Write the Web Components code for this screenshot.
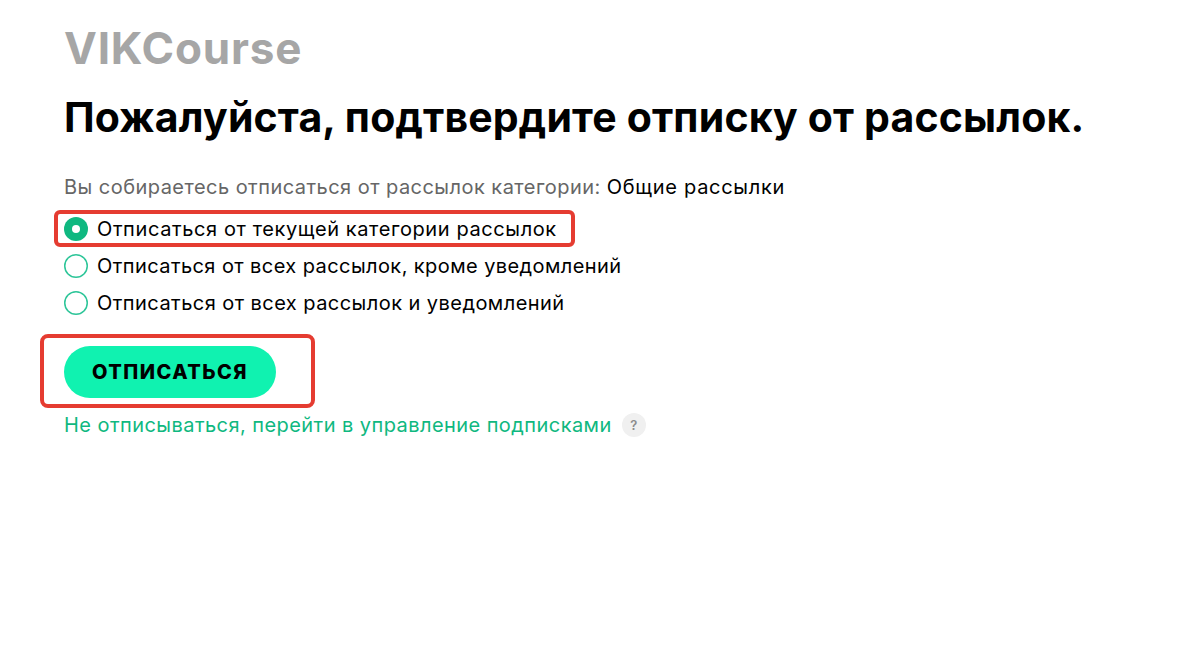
<!DOCTYPE html>
<html lang="ru">
<head>
<meta charset="utf-8">
<title>VIKCourse</title>
<style>
  html, body { margin: 0; background: #fff; }
  body { font-family: Inter, "Noto Sans", sans-serif; color: #000; }
</style>
</head>
<body>
<unsub-page>
  <span slot="logo">VIKCourse</span>
  <span slot="title">Пожалуйста, подтвердите отписку от рассылок.</span>
  <span slot="intro">Вы собираетесь отписаться от рассылок категории:</span>
  <span slot="category">Общие рассылки</span>
  <radio-row slot="options" checked marked style="letter-spacing: 0.6px">Отписаться от текущей категории рассылок</radio-row>
  <radio-row slot="options" style="letter-spacing: 0.42px">Отписаться от всех рассылок, кроме уведомлений</radio-row>
  <radio-row slot="options" style="letter-spacing: 0.45px">Отписаться от всех рассылок и уведомлений</radio-row>
  <pill-button slot="action" marked>Отписаться</pill-button>
  <help-link slot="link">Не отписываться, перейти в управление подписками</help-link>
</unsub-page>

<script>
class UnsubPage extends HTMLElement {
  constructor() {
    super();
    this.attachShadow({ mode: "open" });
  }
  connectedCallback() {
    this.shadowRoot.innerHTML = `
      <style>
        :host { display: block; height: 671px; box-sizing: border-box; padding: 25px 0 0 64px; overflow: hidden; }
        .logo { font-size: 44px; font-weight: 700; line-height: 46px; color: #a6a6a6; letter-spacing: 0.82px; }
        h1 { margin: 21px 0 0; font-size: 41px; font-weight: 700; line-height: 50px; color: #000; letter-spacing: 0.17px; white-space: nowrap; }
        .intro { margin-top: 32px; font-size: 20px; line-height: 26px; color: #666; letter-spacing: 0.46px; }
        .intro b { font-weight: 400; color: #000; letter-spacing: 0.7px; }
        .options { margin-top: 15px; display: flex; flex-direction: column; gap: 9px; }
        .action { margin-top: 29px; }
        .link { margin-top: 14px; }
      </style>
      <div class="logo"><slot name="logo"></slot></div>
      <h1><slot name="title"></slot></h1>
      <div class="intro"><slot name="intro"></slot> <b><slot name="category"></slot></b></div>
      <div class="options"><slot name="options"></slot></div>
      <div class="action"><slot name="action"></slot></div>
      <div class="link"><slot name="link"></slot></div>
    `;
  }
}

class RadioRow extends HTMLElement {
  constructor() {
    super();
    this.attachShadow({ mode: "open" });
  }
  connectedCallback() {
    const checked = this.hasAttribute("checked");
    this.shadowRoot.innerHTML = `
      <style>
        :host { display: flex; align-items: center; gap: 9px; height: 28px; position: relative; width: max-content; font-size: 20px; letter-spacing: 0.55px; color: #000; }
        svg { width: 24px; height: 24px; flex: none; }
        :host([marked])::after {
          content: ""; position: absolute; left: -10px; top: -5px; width: 513px; height: 29px;
          border: 4px solid #e53c31; border-radius: 6px;
        }
      </style>
      <svg viewBox="0 0 24 24">
        ${checked
          ? `<circle cx="12" cy="12" r="12" fill="#0fb880"/><circle cx="12" cy="12" r="4" fill="#fff"/>`
          : `<circle cx="12" cy="12" r="11.25" fill="none" stroke="#2cc598" stroke-width="1.5"/>`}
      </svg>
      <span><slot></slot></span>
    `;
  }
}

class PillButton extends HTMLElement {
  constructor() {
    super();
    this.attachShadow({ mode: "open" });
  }
  connectedCallback() {
    this.shadowRoot.innerHTML = `
      <style>
        :host { display: block; position: relative; width: 212px; }
        button {
          width: 212px; height: 52px; border: 0; border-radius: 26px; background: #10f2b0; color: #000;
          font: 800 20px Inter, "Noto Sans", sans-serif; letter-spacing: 1.45px; text-transform: uppercase; padding: 0;
        }
        :host([marked])::after {
          content: ""; position: absolute; left: -24px; top: -12px; width: 267px; height: 66px;
          border: 4px solid #e53c31; border-radius: 8px;
        }
      </style>
      <button type="button"><slot></slot></button>
    `;
  }
}

class HelpLink extends HTMLElement {
  constructor() {
    super();
    this.attachShadow({ mode: "open" });
  }
  connectedCallback() {
    this.shadowRoot.innerHTML = `
      <style>
        :host { display: flex; align-items: center; gap: 10px; font-size: 20px; line-height: 26px; letter-spacing: 0.44px; color: #0fb880; }
        i {
          width: 24px; height: 24px; border-radius: 50%; background: #f0f0f0; color: #8c8c8c;
          font: 600 13px/24px Inter, sans-serif; letter-spacing: 0; text-align: center;
        }
      </style>
      <span><slot></slot></span>
      <i>?</i>
    `;
  }
}

customElements.define("unsub-page", UnsubPage);
customElements.define("radio-row", RadioRow);
customElements.define("pill-button", PillButton);
customElements.define("help-link", HelpLink);
</script>
</body>
</html>
